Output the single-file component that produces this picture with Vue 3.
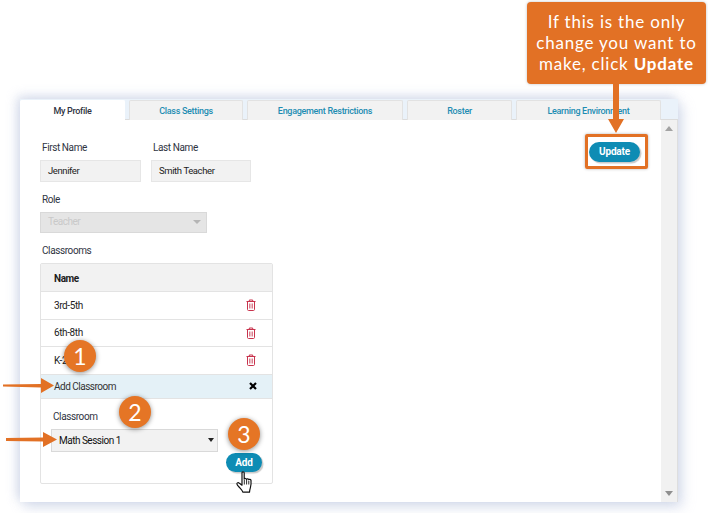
<template>
  <div class="page">
    <section class="panel">
      <nav class="tabs">
        <a v-for="t in tabs" :key="t.name" class="tab" :class="{ active: t.active }" :style="{ width: t.w + 'px' }">{{ t.name }}</a>
      </nav>

      <div class="main">
        <div class="content">
          <div class="toprow">
            <div class="names">
              <div class="field first">
                <label>First Name</label>
                <div class="input">Jennifer</div>
              </div>
              <div class="field last">
                <label>Last Name</label>
                <div class="input">Smith Teacher</div>
              </div>
            </div>
            <div class="update-box">
              <button class="btn update">Update</button>
            </div>
          </div>

          <div class="field role">
            <label>Role</label>
            <div class="select disabled">Teacher<i class="caret"></i></div>
          </div>

          <label class="classrooms-label">Classrooms</label>
          <div class="table">
            <div class="thead">Name</div>
            <div v-for="r in rooms" :key="r" class="row">
              <span>{{ r }}</span>
              <svg class="trash" width="10" height="12" viewBox="0 0 10 12" fill="none" stroke="#c8334d" stroke-width="1">
                <path d="M.5 2.5h9M3.3 2.3V1h3.4v1.3M1.5 2.5v8c0 .6.4 1 1 1h5c.6 0 1-.4 1-1v-8" />
                <path d="M3.5 4.5v5M5 4.5v5M6.5 4.5v5" stroke-width=".9" stroke-opacity=".7" />
              </svg>
            </div>
            <div class="add-head">
              <span>Add Classroom</span>
              <svg width="8" height="8" viewBox="0 0 8 8" stroke="#000" stroke-width="2.2"><path d="M1 1l6 6M7 1L1 7" /></svg>
            </div>
            <div class="add-body">
              <label>Classroom</label>
              <div class="select">Math Session 1<i class="caret dark"></i></div>
              <div class="add-actions"><button class="btn add">Add</button></div>
            </div>
          </div>
        </div>

        <aside class="scrollbar">
          <i class="up"></i>
          <i class="down"></i>
        </aside>
      </div>
    </section>

    <!-- annotation layer -->
    <div class="callout">If this is the only change you want to make, click <b>Update</b></div>
    <svg class="arrow-down" width="16" height="50" viewBox="0 0 16 50"><path d="M5 0h6v35h5L8 49 0 35h5z" fill="#e27125" /></svg>

    <svg class="arrow a1" width="52" height="16" viewBox="0 0 52 16"><path d="M0 6.500L38 6V0l13 7.500L38 15V9.500L0 8.500z" fill="#e27125" /></svg>
    <svg class="arrow a2" width="52" height="16" viewBox="0 0 52 16"><path d="M0 6L37 5.500V0l14 7.500L37 15V9.500L0 9z" fill="#e27125" /></svg>

    <div class="badge b1">1</div>
    <div class="badge b2">2</div>
    <div class="badge b3">3</div>

    <svg class="hand" width="20" height="23" viewBox="0 0 20 23" fill="#fff" stroke="#111" stroke-width="1.200" stroke-linejoin="round">
      <path d="M6 1.800c0-1.300 2.200-1.300 2.200 0v6.400c.2-1 2.200-1 2.300.2.200-.9 2.200-.8 2.300.4.300-.8 2.100-.6 2.200.6.200 2.500.2 5-.6 7.200-.4 1.300-.7 2.400-.9 4.600H6.800c-.5-1.800-1.500-2.800-2.900-4.300C2.800 15.700 1 14 .9 13c-.2-1.400 1.400-1.700 2.500-.8l2.600 2z" />
      <path d="M8.300 9v4.500M10.600 9v4.500M12.800 10v3.500" stroke-width=".9" fill="none" />
    </svg>
  </div>
</template>

<script setup>
const tabs = [
  { name: 'My Profile', w: 105, active: true },
  { name: 'Class Settings', w: 114 },
  { name: 'Engagement Restrictions', w: 156 },
  { name: 'Roster', w: 105 },
  { name: 'Learning Environment', w: 145 },
]
const rooms = ['3rd-5th', '6th-8th', 'K-2']
</script>

<style>
html, body { background: #fff; }
</style>

<style scoped>
.page { position: relative; width: 708px; height: 513px; padding: 99px 0 0 20px; box-sizing: border-box; overflow: hidden; font-family: Roboto, "Liberation Sans", sans-serif; font-size: 10px; letter-spacing: -.4px; color: #2f3442; }

.panel { width: 658px; height: 403px; background: #fff; display: flex; flex-direction: column; box-shadow: -3px -3px 10px rgba(170,185,215,.45), 4px 5px 12px rgba(170,185,215,.45); }

.tabs { display: flex; gap: 4px; height: 21px; padding-top: 1px; box-sizing: border-box; background: #eaf2fa; border-bottom: 1px solid #dcdcdc; }
.tab { display: flex; align-items: center; justify-content: center; height: 20px; box-sizing: border-box; background: #f2f2f2; border: 1px solid #e2e2e2; border-bottom: 0; border-radius: 2px 2px 0 0; color: #1e8db3; font-weight: 500; font-size: 9px; letter-spacing: -.3px; }
.tab.active { background: #fff; color: #2f3442; border-color: #fff; height: 20px; }

.main { flex: 1; display: flex; min-height: 0; }
.content { flex: 1; padding: 14px 13px 0 20px; }
.scrollbar { width: 17px; background: #f1f1f1; border-right: 1px solid #dedede; box-sizing: border-box; display: flex; flex-direction: column; justify-content: space-between; align-items: center; padding: 6px 0; }
.up, .down { width: 0; height: 0; border-left: 4px solid transparent; border-right: 4px solid transparent; }
.up { border-bottom: 5px solid #a3a3a3; }
.down { border-top: 5px solid #8f8f8f; }

.toprow { display: flex; justify-content: space-between; align-items: flex-start; }
.names { display: flex; gap: 10px; padding-top: 8px; }
label { display: block; padding-left: 2px; line-height: 12px; }
.field label { margin-bottom: 6px; }
.input { height: 22px; line-height: 20px; box-sizing: border-box; background: #f2f2f2; border: 1px solid #e6e6e6; padding-left: 7px; color: #222; font-size: 9.500px; }
.first .input { width: 101px; }
.last .input { width: 100px; }

.update-box { border: 3px solid #e27125; border-radius: 2px; box-sizing: border-box; width: 63px; height: 35px; display: flex; align-items: center; padding-left: 1px; box-shadow: 0 0 3px rgba(0,0,0,.3); }
.btn { border: 0; padding: 0; background: #0e8cb4; color: #fff; font: 700 10px Roboto, "Liberation Sans", sans-serif; letter-spacing: -.2px; border-radius: 11px; box-shadow: 1.500px 1.500px 1px #c9c9c9; }
.update { width: 51px; height: 20px; }
.add { width: 36px; height: 19px; }

.role { margin-top: 12px; }
.role label { margin-bottom: 6px; }
.select { position: relative; height: 23px; line-height: 21px; box-sizing: border-box; width: 167px; background: #f2f2f2; border: 1px solid #d9d9d9; padding-left: 7px; color: #111; letter-spacing: -.5px; }
.select.disabled { height: 21px; line-height: 18px; background: #e5e5e5; color: #c9c9c9; }
.caret { position: absolute; right: 5px; top: 7px; width: 0; height: 0; border-left: 4px solid transparent; border-right: 4px solid transparent; border-top: 4px solid #b5b5b5; }
.caret.dark { right: 3px; top: 8px; border-left-width: 3.500px; border-right-width: 3.500px; border-top-color: #222; }

.classrooms-label { margin-top: 12px; margin-bottom: 6px; }
.table { width: 233px; height: 221px; box-sizing: border-box; border: 1px solid #e3e3e3; border-radius: 2px; }
.thead { height: 28px; line-height: 30px; background: #f2f2f2; padding-left: 13px; font-weight: 700; color: #1c1c1c; border-bottom: 1px solid #e3e3e3; box-sizing: border-box; }
.row { height: 27.500px; display: flex; align-items: center; justify-content: space-between; padding: 0 16px 0 13px; border-bottom: 1px solid #e3e3e3; box-sizing: border-box; color: #222; }
.add-head { height: 24px; display: flex; align-items: center; justify-content: space-between; padding: 0 15px 0 13px; background: #e4f1f7; border-bottom: 1px solid #e3e3e3; box-sizing: border-box; color: #333; letter-spacing: -.5px; }
.add-body { padding: 12px 10px 0 10px; }
.add-body label { margin-bottom: 6px; }
.add-actions { display: flex; justify-content: flex-end; margin-top: 1px; padding-left: 174px; }

.callout { position: absolute; left: 527px; top: 2px; width: 179px; height: 82px; box-sizing: border-box; padding: 9px 2px 0; background: #e27125; border-radius: 4px; color: #fff; font: 400 17px/21px Lato, sans-serif; letter-spacing: .8px; text-align: center; box-shadow: 0 0 3px rgba(0,0,0,.25); }
.arrow-down { position: absolute; left: 608px; top: 84px; }
.arrow { position: absolute; }
.a1 { left: 3px; top: 378px; }
.a2 { left: 6px; top: 432px; }

.badge { position: absolute; width: 32px; height: 32px; border-radius: 50%; background: #e57525; color: #fff; font: 400 23px/32px Lato, sans-serif; letter-spacing: 0; text-align: center; box-shadow: 0 1px 5px rgba(0,0,0,.45); }
.b1 { left: 64px; top: 340px; }
.b2 { left: 119px; top: 396px; }
.b3 { left: 228px; top: 418px; }
.hand { position: absolute; left: 236px; top: 471px; }
</style>
